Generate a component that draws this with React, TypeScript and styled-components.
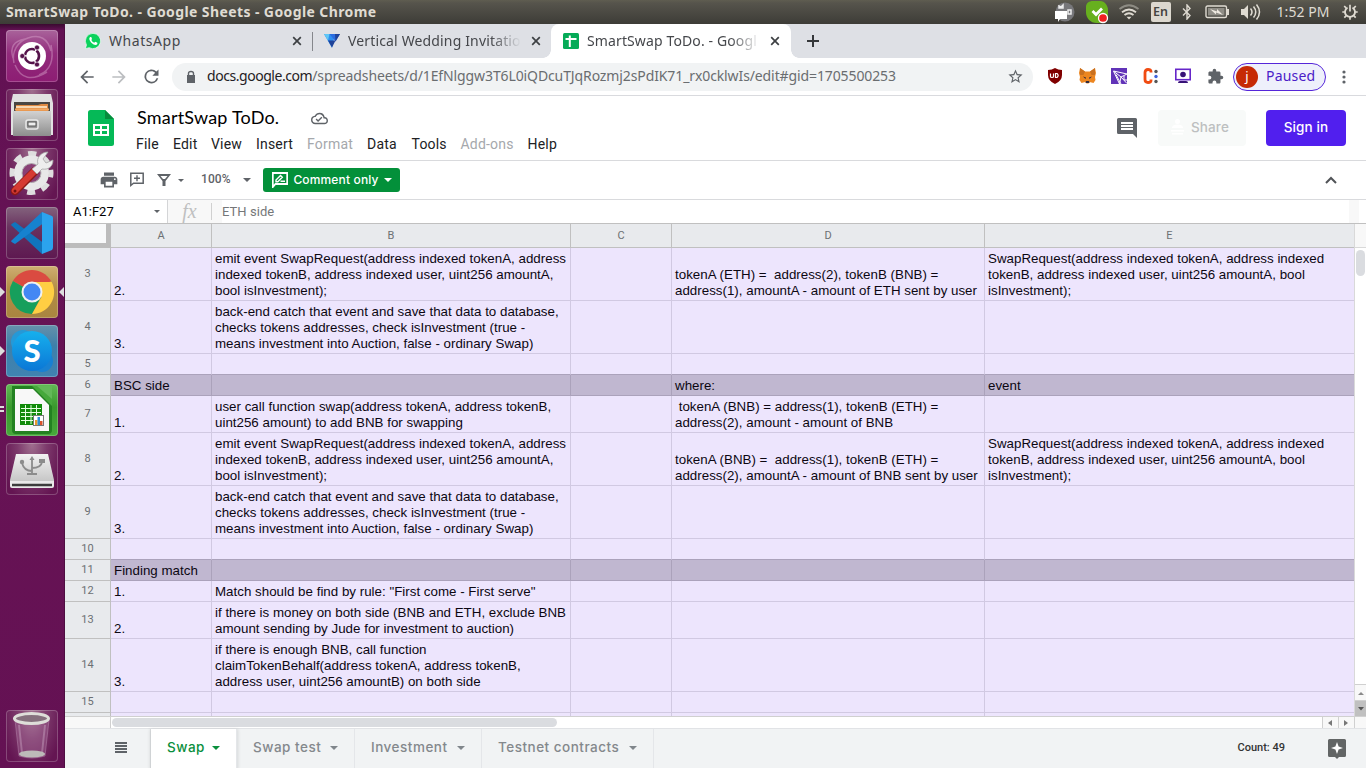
import React from "react";
import styled, { createGlobalStyle, css } from "styled-components";

const Global = createGlobalStyle`
  * { box-sizing: border-box; }
  body { margin: 0; background: #fff; overflow: hidden; }
  svg { display: block; flex: none; }
`;

const ubuntu = `"Noto Sans", "Open Sans", sans-serif`;
const product = `Lato, "Open Sans", sans-serif`;
const productMedium = `Inter, "Open Sans", sans-serif`;
const roboto = `Roboto, "Liberation Sans", sans-serif`;

const Screen = styled.div`
  width: 1366px;
  height: 768px;
  display: flex;
  flex-direction: column;
  overflow: hidden;
`;

/* ---------- desktop panel ---------- */
const Panel = styled.header`
  height: 24px;
  flex: none;
  display: flex;
  align-items: center;
  justify-content: space-between;
  padding: 0 6px;
  background: linear-gradient(#5f5d50 0, #56544c 3px, #3d3c37 100%);
  color: #dfdbd2;
  font-family: ${ubuntu};
`;
const WindowTitle = styled.div`
  font-size: 14px;
  line-height: 20px;
  font-weight: 700;
  letter-spacing: 0.4px;
  white-space: pre;
`;
const Indicators = styled.div`
  display: flex;
  align-items: center;
`;
const Indicator = styled.div<{ $w: number }>`
  width: ${(p) => p.$w}px;
  height: 24px;
  display: flex;
  align-items: center;
  justify-content: center;
`;
const Clock = styled.div`
  width: 74px;
  font-size: 14px;
  line-height: 20px;
  text-align: center;
  white-space: nowrap;
  letter-spacing: 0.05px;
`;
const LangBadge = styled.div`
  width: 20px;
  height: 20px;
  border-radius: 2px;
  background: #dcd8cf;
  color: #45443f;
  font: 600 12.5px/20px ${ubuntu};
  text-align: center;
`;

const Body = styled.div`
  flex: 1;
  display: flex;
  min-height: 0;
`;

/* ---------- launcher ---------- */
const Launcher = styled.nav`
  width: 65px;
  flex: none;
  display: flex;
  flex-direction: column;
  gap: 7px;
  padding: 6px 6px 6px 6px;
  background: linear-gradient(#3a0a30 0, #621153 6px, #671355 50%, #641153 100%);
  border-right: 1px solid #4e0d41;
`;
const Tile = styled.div<{ $bg: string; $last?: boolean }>`
  position: relative;
  width: 52px;
  height: 52px;
  flex: none;
  border-radius: 4px;
  background: ${(p) => p.$bg};
  box-shadow: inset 0 0 0 1px rgba(255, 255, 255, 0.22);
  ${(p) => p.$last && css`margin-top: auto;`}
`;
const RunMark = styled.svg<{ $right?: boolean }>`
  position: absolute;
  top: 20px;
  ${(p) => (p.$right ? "right: -6px;" : "left: -6px;")}
`;

/* ---------- browser ---------- */
const Browser = styled.main`
  flex: 1;
  min-width: 0;
  display: flex;
  flex-direction: column;
  background: #fff;
`;
const TabStrip = styled.div`
  height: 34px;
  flex: none;
  display: flex;
  padding-left: 8px;
  background: #dee0e5;
  font-family: ${ubuntu};
`;
const BrowserTab = styled.div<{ $active?: boolean; $w: number }>`
  position: relative;
  width: ${(p) => p.$w}px;
  display: flex;
  align-items: center;
  padding: 0 ${(p) => (p.$active ? 9 : 8)}px 0 12px;
  gap: 8px;
  ${(p) =>
    p.$active &&
    css`
      background: #fff;
      border-radius: 8px 8px 0 0;
      &::before,
      &::after {
        content: "";
        position: absolute;
        bottom: 0;
        width: 8px;
        height: 8px;
      }
      &::before {
        left: -8px;
        background: radial-gradient(circle at 0 0, transparent 7.5px, #fff 8px);
      }
      &::after {
        right: -8px;
        background: radial-gradient(circle at 100% 0, transparent 7.5px, #fff 8px);
      }
    `}
`;
const TabTitle = styled.div<{ $ls: number; $fade?: boolean }>`
  flex: 1;
  min-width: 0;
  white-space: nowrap;
  font-size: 14px;
  line-height: 20px;
  color: #45474b;
  letter-spacing: ${(p) => p.$ls}px;
  ${(p) =>
    p.$fade &&
    css`
      mask-image: linear-gradient(90deg, #000 calc(100% - 30px), transparent 100%);
    `}
`;
const TabDivider = styled.div`
  width: 1px;
  height: 19px;
  margin: 8px -1px 0 0;
  background: #85878c;
`;
const NewTab = styled.div`
  width: 44px;
  display: flex;
  align-items: center;
  justify-content: center;
`;
const AddressRow = styled.div`
  height: 38px;
  flex: none;
  display: flex;
  align-items: center;
  border-bottom: 1px solid #d9dade;
  padding: 0 6px;
`;
const NavButton = styled.div`
  width: 32px;
  display: flex;
  justify-content: center;
`;
const Omnibox = styled.div`
  width: 861px;
  height: 28px;
  margin-left: 5px;
  border-radius: 14px;
  background: #f1f3f4;
  display: flex;
  align-items: center;
  padding: 0 9px 0 11px;
`;
const Url = styled.div`
  flex: 1;
  margin: -2px 0 0 8px;
  font: 14px/20px ${ubuntu};
  letter-spacing: -0.11px;
  color: #6a6d70;
  white-space: nowrap;
`;
const Host = styled.span`
  color: #1f2023;
  letter-spacing: -0.45px;
`;
const Extensions = styled.div`
  display: flex;
  margin-left: 6px;
`;
const Profile = styled.div`
  width: 93px;
  height: 28px;
  margin: 0 2px;
  border: 1.5px solid #5526d9;
  border-radius: 14px;
  background: #eef0fb;
  display: flex;
  align-items: center;
  padding-left: 2px;
  color: #4a20c8;
  font: 14px/20px ${ubuntu};
  letter-spacing: 0.2px;
`;
const ProfileState = styled.span`
  margin-top: -2px;
`;
const Avatar = styled.div`
  width: 22px;
  height: 22px;
  margin-right: 8px;
  border-radius: 50%;
  background: #c62a05;
  color: #fff;
  font: 13px/20px ${ubuntu};
  text-align: center;
`;

/* ---------- document header ---------- */
const DocHeader = styled.div`
  height: 65px;
  flex: none;
  display: flex;
  align-items: flex-start;
  border-bottom: 1px solid #d9dadd;
  padding: 14px 20px 0 23px;
`;
const DocMeta = styled.div`
  flex: 1;
  margin: -6px 0 0 22px;
`;
const TitleRow = styled.div`
  height: 28px;
  display: flex;
  align-items: center;
`;
const DocTitle = styled.div`
  width: 175px;
  padding-left: 1px;
  margin-top: -2px;
  font: 18px/24px ${product};
  letter-spacing: 0.2px;
  color: #000;
`;
const MenuBar = styled.div`
  display: flex;
  font: 14px/20px ${roboto};
  letter-spacing: 0.2px;
  margin-top: 2px;
`;
const MenuItem = styled.div<{ $w: number; $off?: boolean }>`
  width: ${(p) => p.$w}px;
  white-space: nowrap;
  color: ${(p) => (p.$off ? "#a5a8ac" : "#202124")};
`;
const HeaderIcon = styled.div`
  margin: 8px 21px 0 0;
`;
const HeaderButton = styled.div<{ $primary?: boolean }>`
  width: ${(p) => (p.$primary ? 80 : 88)}px;
  height: 36px;
  margin-left: ${(p) => (p.$primary ? 20 : 0)}px;
  border-radius: 4px;
  display: flex;
  align-items: center;
  justify-content: center;
  gap: 7px;
  padding: 0 ${(p) => (p.$primary ? 0 : 4)}px 2px 0;
  font: 500 13.5px/20px ${productMedium};
  letter-spacing: 0.1px;
  background: ${(p) => (p.$primary ? "#511fee" : "#f8faf9")};
  color: ${(p) => (p.$primary ? "#fff" : "#bdbfc0")};
`;

/* ---------- toolbar ---------- */
const ToolRow = styled.div`
  height: 39px;
  flex: none;
  display: flex;
  align-items: center;
  padding: 0 29px 0 34px;
  border-bottom: 1px solid #d9dadd;
`;
const Slot = styled.div<{ $w: number }>`
  width: ${(p) => p.$w}px;
  flex: none;
  display: flex;
  justify-content: center;
`;
const Zoom = styled.div`
  width: 40px;
  margin: -2px 0 0 13px;
  font: 500 12px/16px ${roboto};
  letter-spacing: 0.1px;
  color: #5f6368;
`;
const CommentOnly = styled.div`
  width: 137px;
  height: 24px;
  margin: 0 auto 0 11px;
  border-radius: 3px;
  background: #03903a;
  display: flex;
  align-items: center;
  justify-content: space-between;
  padding: 0 8px 0 9px;
  color: #fff;
  font: 500 12px/16px ${productMedium};
  letter-spacing: 0.15px;
  white-space: nowrap;
`;
const Caret = styled.i<{ $c?: string; $s?: number }>`
  width: 0;
  height: 0;
  flex: none;
  border: ${(p) => p.$s ?? 4}px solid transparent;
  border-top-color: ${(p) => p.$c ?? "#5f6368"};
  border-bottom: 0;
`;

/* ---------- formula bar ---------- */
const FormulaBar = styled.div`
  height: 24px;
  flex: none;
  display: flex;
  align-items: center;
  border-bottom: 1px solid #c0c0c0;
  font: 13px/16px ${roboto};
`;
const NameBox = styled.div`
  width: 103px;
  height: 23px;
  display: flex;
  align-items: center;
  justify-content: space-between;
  padding: 0 7px 0 8px;
  border-right: 1px solid #d4d5d7;
  color: #000;
`;
const FxBox = styled.div`
  width: 43px;
  height: 23px;
  background: #f8f8f8;
  display: flex;
  align-items: center;
  justify-content: center;
  font: italic 20px/20px "Liberation Serif", serif;
  padding-bottom: 2px;
  color: #bfc0c1;
`;
const Formula = styled.div`
  flex: 1;
  display: flex;
  align-items: center;
  color: #757779;
  letter-spacing: 0.05px;
`;
const FormulaRule = styled.div`
  width: 11px;
  height: 23px;
  padding: 3px 0;
  background: #f8f8f8;
  &::before {
    content: "";
    display: block;
    width: 1px;
    height: 17px;
    background: #d0d0d0;
  }
`;
const FormulaHandle = styled.div`
  width: 10px;
  height: 23px;
  margin-right: 7px;
  background: #f8f8f8;
`;

/* ---------- grid ---------- */
const SheetArea = styled.div`
  height: 492px;
  flex: none;
  display: flex;
  overflow: hidden;
`;
const COLS = "46px 101px 359px 101px 313px 370px";
const Sheet = styled.div`
  width: 1290px;
  flex: none;
  overflow: hidden;
`;
const HeadRow = styled.div`
  display: grid;
  grid-template-columns: ${COLS};
  height: 24px;
`;
const SelectAll = styled.div`
  background: #f8f9fa;
  border: solid #bcbcbc;
  border-width: 0 5px 5px 0;
`;
const HeadCell = styled.div`
  background: #e8eaed;
  border: solid #c0c0c0;
  border-width: 0 1px 1px 0;
  color: #6c7073;
  font: 11px/23px ${roboto};
  text-align: center;
`;
const SheetRow = styled.div<{ $h: number }>`
  display: grid;
  grid-template-columns: ${COLS};
  height: ${(p) => p.$h}px;
`;
const RowNumber = styled.div`
  display: flex;
  align-items: center;
  justify-content: center;
  background: #e8eaed;
  border: solid #c0c0c0;
  border-width: 0 1px 1px 0;
  color: #6c7073;
  font: 11px/14px ${roboto};
`;
const Cell = styled.div<{ $band?: boolean; $beforeBand?: boolean }>`
  display: flex;
  align-items: flex-end;
  padding: 0 3px 1px;
  background: ${(p) => (p.$band ? "#c0b7d0" : "#ede5fd")};
  border: solid;
  border-width: 0 1px 1px 0;
  border-color: ${(p) =>
    p.$band ? "#aba2bb" : p.$beforeBand ? "#d1c9e2 #d1c9e2 #aba2bb" : "#d1c9e2"};
  color: #0c0712;
  font: 13.333px/16px "Liberation Sans", Arial, sans-serif;
  letter-spacing: 0.01px;
  white-space: pre;
`;

const VScroll = styled.div`
  flex: 1;
  display: flex;
  flex-direction: column;
  background: #fff;
  border-left: 1px solid #d9d9d9;
  margin-left: -1px;
  position: relative;
`;
const VHead = styled.div`
  height: 24px;
  background: #f8f8f8;
  border-bottom: 1px solid #d9d9d9;
`;
const VThumb = styled.div`
  width: 9px;
  height: 26px;
  margin: 2px 0 auto 1px;
  border-radius: 5px;
  background: #dadce0;
`;
const VArrow = styled.div<{ $dark?: boolean }>`
  height: 16px;
  display: flex;
  align-items: center;
  justify-content: center;
  background: ${(p) => (p.$dark ? "#c0c0c0" : "#f8f8f8")};
  border-top: 1px solid #d0d0d0;
`;
const HScroll = styled.div`
  height: 12px;
  flex: none;
  display: flex;
  border-top: 1px solid #d0d0d0;
  background: #fff;
`;
const HCorner = styled.div<{ $w: number; $last?: boolean }>`
  width: ${(p) => p.$w}px;
  background: #f8f8f8;
  border: solid #d0d0d0;
  border-width: ${(p) => (p.$last ? "0 0 0 1px" : "0 1px 0 0")};
`;
const HThumb = styled.div`
  width: 445px;
  height: 9px;
  margin: 1px auto 0 1px;
  border-radius: 5px;
  background: #dadce0;
`;
const HArrow = styled.div`
  width: 16px;
  display: flex;
  align-items: center;
  justify-content: center;
  padding-right: 2px;
  background: #f8f8f8;
  border-left: 1px solid #d0d0d0;
`;

/* ---------- sheet tabs ---------- */
const Footer = styled.footer`
  flex: 1;
  display: flex;
  background: #f1f3f4;
  border-top: 1px solid #e1e3e6;
`;
const AllSheets = styled.div`
  width: 86px;
  display: flex;
  align-items: center;
  justify-content: flex-end;
  padding: 0 23px 2px 0;
  border-right: 1px solid #e0e2e4;
`;
const SheetTab = styled.div<{ $w: number; $active?: boolean }>`
  width: ${(p) => p.$w}px;
  display: flex;
  align-items: center;
  justify-content: space-between;
  padding: 0 16px 2px;
  font: 500 13.5px/20px ${productMedium};
  letter-spacing: 0.5px;
  white-space: nowrap;
  color: ${(p) => (p.$active ? "#0a8f3c" : "#84888c")};
  background: ${(p) => (p.$active ? "#fff" : "transparent")};
  border-right: 1px solid #e4e6e9;
  ${(p) => p.$active && css`box-shadow: 0 1px 3px 1px rgba(60, 64, 67, 0.15);`}
`;
const SheetName = styled.span`
  padding-bottom: 2px;
`;
const Count = styled.div`
  margin-left: auto;
  padding-right: 43px;
  font: 500 11px/37px ${roboto};
  color: #333;
`;
const Explore = styled.div`
  padding: 10px 20px 0 0;
`;

/* ---------- small glyphs ---------- */
const Close = () => (
  <svg width="14" height="14" viewBox="0 0 14 14" stroke="#3d4043" strokeWidth="1.7">
    <path d="M3.2 3.2l7.6 7.6M10.800 3.200l-7.600 7.600" />
  </svg>
);
const Material = ({ d, s, c = "#5f6368" }: { d: string; s: number; c?: string }) => (
  <svg width={s} height={s} viewBox="0 0 24 24" fill={c}>
    <path d={d} />
  </svg>
);

const rows: { n: number; h: number; band?: boolean; c: string[] }[] = [
  { n: 3, h: 53, c: ["2.", "emit event SwapRequest(address indexed tokenA, address\nindexed tokenB, address indexed user, uint256 amountA,\nbool isInvestment);", "", "tokenA (ETH) =  address(2), tokenB (BNB) =\naddress(1), amountA - amount of ETH sent by user", "SwapRequest(address indexed tokenA, address indexed\ntokenB, address indexed user, uint256 amountA, bool\nisInvestment);"] },
  { n: 4, h: 53, c: ["3.", "back-end catch that event and save that data to database,\nchecks tokens addresses, check isInvestment (true -\nmeans investment into Auction, false - ordinary Swap)", "", "", ""] },
  { n: 5, h: 21, c: ["", "", "", "", ""] },
  { n: 6, h: 21, band: true, c: ["BSC side", "", "", "where:", "event"] },
  { n: 7, h: 37, c: ["1.", "user call function swap(address tokenA, address tokenB,\nuint256 amount) to add BNB for swapping", "", " tokenA (BNB) = address(1), tokenB (ETH) =\naddress(2), amount - amount of BNB", ""] },
  { n: 8, h: 53, c: ["2.", "emit event SwapRequest(address indexed tokenA, address\nindexed tokenB, address indexed user, uint256 amountA,\nbool isInvestment);", "", "tokenA (BNB) =  address(1), tokenB (ETH) =\naddress(2), amountA - amount of BNB sent by user", "SwapRequest(address indexed tokenA, address indexed\ntokenB, address indexed user, uint256 amountA, bool\nisInvestment);"] },
  { n: 9, h: 53, c: ["3.", "back-end catch that event and save that data to database,\nchecks tokens addresses, check isInvestment (true -\nmeans investment into Auction, false - ordinary Swap)", "", "", ""] },
  { n: 10, h: 21, c: ["", "", "", "", ""] },
  { n: 11, h: 21, band: true, c: ["Finding match", "", "", "", ""] },
  { n: 12, h: 21, c: ["1.", 'Match should be find by rule: "First come - First serve"', "", "", ""] },
  { n: 13, h: 37, c: ["2.", "if there is money on both side (BNB and ETH, exclude BNB\namount sending by Jude for investment to auction)", "", "", ""] },
  { n: 14, h: 53, c: ["3.", "if there is enough BNB, call function\nclaimTokenBehalf(address tokenA, address tokenB,\naddress user, uint256 amountB) on both side", "", "", ""] },
  { n: 15, h: 21, c: ["", "", "", "", ""] },
];

const menus: [string, number, boolean?][] = [
  ["File", 37], ["Edit", 38], ["View", 45], ["Insert", 51], ["Format", 60, true],
  ["Data", 44.5], ["Tools", 49], ["Add-ons", 67, true], ["Help", 40],
];

const sheetTabs: [string, number][] = [["Swap", 86], ["Swap test", 118], ["Investment", 127], ["Testnet contracts", 172]];

const plum = "radial-gradient(ellipse at 50% 0, #a0708f 0, #7d3a6c 40%, #641552 85%)";

const UsbDrive = () => (
  <svg width="52" height="52">
    <defs><linearGradient id="drv" x2="0" y2="1"><stop stopColor="#f2f2f2" /><stop offset="1" stopColor="#bdbdbd" /></linearGradient></defs>
    <path d="M10 11h32l6 26v5a2 2 0 01-2 2H6a2 2 0 01-2-2v-5z" fill="url(#drv)" />
    <path d="M4 38h44v5q0 2-2 2H6q-2 0-2-2z" fill="#e9e9e9" />
    <path d="M6 42h40" stroke="#3c3c3c" strokeWidth="2.6" />
    <g fill="none" stroke="#8c8c8c" strokeWidth="1.8">
      <path d="M26 15v16M26 28q-8 0-10-8M26 25q9 0 10-6M21 31h10" />
    </g>
    <circle cx="16" cy="19" r="2.2" fill="#8c8c8c" />
    <path d="M33 16h6v4h-6zM23.500 17l2.500-4 2.500 4z" fill="#8c8c8c" />
  </svg>
);

export default function App() {
  return (
    <Screen>
      <Global />
      <Panel>
        <WindowTitle>SmartSwap ToDo. - Google Sheets - Google Chrome</WindowTitle>
        <Indicators>
          <Indicator $w={38}>
            <svg width="22" height="22"><circle cx="12" cy="11" r="9.500" fill="#77777a" /><path d="M2 10h12v8H7l-2 3v-3H2z" fill="#fff" /><path d="M6 7V5l2 1 2-2v3zM15 9h3v4h-3z" fill="none" stroke="#eee" strokeWidth="1.500" /></svg>
          </Indicator>
          <Indicator $w={28}>
            <svg width="24" height="24"><path d="M8 1h7c5 0 8 5 8 9v6c0 5-4 7-8 7h-3C5 23 1 18 1 12V7c0-4 3-6 7-6z" fill="#67b01e" /><path d="M7.500 11l3.500 3.500 6-6" stroke="#fff" strokeWidth="2.800" fill="none" /><circle cx="18" cy="18" r="4.500" fill="#ef2020" stroke="#fff" strokeWidth="1.300" /></svg>
          </Indicator>
          <Indicator $w={36}>
            <svg width="22" height="16" fill="none" stroke="#dfdbd2" strokeWidth="1.800"><path d="M1.500 5Q11-2.500 20.500 5" stroke="#8d8b83" /><path d="M4 8.200q7-5.500 14 0M6.500 11q4.500-3.600 9 0" /><path d="M8.500 12.800h5L11 15.500z" fill="#dfdbd2" stroke="none" /></svg>
          </Indicator>
          <Indicator $w={27}><LangBadge>En</LangBadge></Indicator>
          <Indicator $w={26}>
            <svg width="10" height="16" fill="none" stroke="#dfdbd2" strokeWidth="1.400"><path d="M1 4.500l7 7L5 15V1l3 3.500-7 7" /></svg>
          </Indicator>
          <Indicator $w={34}>
            <svg width="25" height="14"><rect x="1" y="1" width="20.500" height="11.500" rx="1.500" fill="none" stroke="#dfdbd2" strokeWidth="1.400" /><rect x="3" y="3" width="16.500" height="7.500" fill="#8f8d86" /><path d="M22 4h2v6h-2" fill="#dfdbd2" /><path d="M5 4l7 2.500V4l6 6-7-2.500v2z" fill="#eee9e0" /></svg>
          </Indicator>
          <Indicator $w={32}>
            <svg width="21" height="18"><path d="M1 6h3l4-4v14l-4-4H1z" fill="#dfdbd2" /><path d="M10.500 5.500q3 3.500 0 7M13.500 3.500q4.500 5.500 0 11M16.500 1.500q6 7.500 0 15" fill="none" stroke="#dfdbd2" strokeWidth="1.500" /></svg>
          </Indicator>
          <Clock>1:52 PM</Clock>
          <Indicator $w={20}>
            <svg width="16" height="16" fill="none" stroke="#dfdbd2"><path d="M5.500 3.600a5 5 0 105 0" strokeWidth="1.800" /><path d="M8 .8v6.700" strokeWidth="1.700" /><path d="M4 3.800L2.200 2M12 3.800L13.800 2M3 8H.3M13 8h2.700M4.300 11.700l-2 2M11.700 11.700l2 2M8 13v2.800" strokeWidth="1.700" /></svg>
          </Indicator>
        </Indicators>
      </Panel>
      <Body>
        <Launcher>
          <Tile $bg="linear-gradient(#a9649b, #922b7c 45%, #8d1d73)">
            <svg width="52" height="52"><g fill="none" stroke="#d9a5cd" strokeOpacity=".45"><path d="M8 33A21 21 0 0122 8Q40 2 45 21M45 15Q50 38 33 45M41 42Q18 56 9 35M7 28Q2 12 19 9" strokeWidth="1.500" /></g><circle cx="26" cy="26" r="14" fill="#fff" /><circle cx="26" cy="26" r="7" fill="none" stroke="#54124a" strokeWidth="2.600" strokeDasharray="13.200 1.460" strokeDashoffset="6.500" /><g fill="#54124a" stroke="#fff" strokeWidth=".6"><circle cx="16.300" cy="26" r="2.500" /><circle cx="31" cy="17.500" r="2.500" /><circle cx="31" cy="34.500" r="2.500" /></g></svg>
          </Tile>
          <Tile $bg={plum}>
            <svg width="52" height="52"><defs><linearGradient id="cab" x2="0" y2="1"><stop stopColor="#d2d2d2" /><stop offset="1" stopColor="#8d8d8d" /></linearGradient></defs><path d="M7 5h38l2 9v32H5V14z" fill="#e1e1e1" /><path d="M8 13h36v10H8z" fill="#4a4642" /><path d="M10 16h22l3-1h7v8H10z" fill="#e08a42" /><path d="M10 18h31" stroke="#fff0d8" strokeWidth="1.500" /><path d="M9 20.500h34" stroke="#f1a763" strokeWidth="2" /><path d="M7 22h38v25H7z" fill="url(#cab)" /><rect x="20" y="31" width="12" height="9" rx="2" fill="#999" stroke="#e9e9e9" strokeWidth="1.500" /><rect x="22" y="33" width="8" height="4" fill="#eee" stroke="#555" /></svg>
          </Tile>
          <Tile $bg={plum}>
            <svg width="52" height="52"><circle cx="25.500" cy="25" r="19.500" fill="none" stroke="#dedede" strokeWidth="5" strokeDasharray="8.300 7.015" strokeDashoffset="4" /><circle cx="25.500" cy="25" r="13.500" fill="none" stroke="#e8e8e8" strokeWidth="8" /><circle cx="25.500" cy="25" r="9.500" fill="#893f75" stroke="#b5b5b5" /><path d="M9 43L29 23" stroke="#8b1a16" strokeWidth="8.500" strokeLinecap="round" /><path d="M9 42.500L29 22.500" stroke="#d53a32" strokeWidth="6.500" strokeLinecap="round" /><path d="M26 21l6-5c-2-6 3-12 10-12l-5 7 3 4 7-3c0 7-5 10-11 9l-5 5z" fill="#eee" stroke="#a6a6a6" strokeWidth=".8" /><circle cx="9" cy="43" r="1.500" fill="#75110f" /></svg>
          </Tile>
          <Tile $bg="linear-gradient(#83637d, #69325f 40%, #5e1850)">
            <svg width="52" height="52"><path d="M5 18q0-1 4-3l30 22-3 10z" fill="#1074bd" /><path d="M5 34q0 1 4 3l30-22-3-10z" fill="#1682cf" /><path d="M36 5l10 4q1 .5 1 2v29q0 2-1 3l-10 4z" fill="#2ba3ee" /></svg>
          </Tile>
          <Tile $bg="linear-gradient(#cfae72, #b28d45 45%, #a98540)">
            <RunMark width="5" height="12"><path d="M0 1l5 5-5 5z" fill="#ddd" /></RunMark>
            <svg width="52" height="52"><path d="M26 26L6.900 15A22 22 0 0145 15z" fill="#da4b41" /><path d="M26 26L6.900 15A22 22 0 0026 48l9-17z" fill="#169f5c" /><path d="M26 16h19.700A22 22 0 0126 48l9.500-17z" fill="#ffce43" /><circle cx="26" cy="26" r="10.500" fill="#f1f1f1" /><circle cx="26" cy="26" r="8.500" fill="#4387f4" /></svg>
            <RunMark $right width="5" height="12"><path d="M5 1L0 6l5 5z" fill="#ddd" /></RunMark>
          </Tile>
          <Tile $bg="linear-gradient(#6690ab, #3e80aa 40%, #4083b1)">
            <RunMark width="5" height="12"><path d="M0 1l5 5-5 5z" fill="#ddd" /></RunMark>
            <svg width="52" height="52"><defs><linearGradient id="sky" x2="0" y2="1"><stop stopColor="#16b0ed" /><stop offset="1" stopColor="#0b77d6" /></linearGradient></defs><circle cx="17" cy="17" r="12" fill="#2599d7" /><circle cx="36" cy="36" r="11" fill="#1881d3" /><circle cx="26" cy="26" r="20" fill="url(#sky)" /><text x="26" y="37" textAnchor="middle" fontFamily="Lato, sans-serif" fontWeight="900" fontSize="31" fill="#fff">S</text></svg>
          </Tile>
          <Tile $bg="linear-gradient(#62b955, #39992d 45%, #47a83b)">
            <RunMark width="5" height="12"><path d="M0 3h4M0 7h4" stroke="#ddd" strokeWidth="2" /></RunMark>
            <svg width="52" height="52"><path d="M6 2h40v44q0 4-4 4H10q-4 0-4-4z" fill="#238121" /><path d="M9 5h18l16 16v26H9z" fill="#f8f8f8" /><path d="M26 2h20v20z" fill="#46a83b" /><path d="M31 2h15v13z" fill="#63b858" /><rect x="14" y="20" width="22" height="21" fill="#118b0a" /><g stroke="#e5ffe0" strokeWidth="1"><path d="M15 24.500h20M15 28.500h20M15 32.500h20M15 36.500h20M19.500 21v19M25 21v19M30.500 21v19" /></g><rect x="27.500" y="31.500" width="10" height="10" fill="#fff" stroke="#777" /><path d="M29 36h2.500v5H29z" fill="#e99a2c" /><path d="M31.500 33H34v8h-2.500z" fill="#2f8fd0" /><path d="M34 37h2.500v4H34z" fill="#d9532b" /></svg>
          </Tile>
          <Tile $bg={plum}><UsbDrive /></Tile>
          <Tile $last $bg={plum}>
            <svg width="52" height="52"><path d="M9 10h34l-4 36q-13 4-26 0z" fill="#d9a9cf" fillOpacity=".2" stroke="#c69bbd" strokeOpacity=".4" /><path d="M13 15l3 28M39 15l-3 28" stroke="#e8cfe3" strokeOpacity=".3" strokeWidth="2" /><ellipse cx="26" cy="44" rx="13" ry="3.500" fill="#bdbab9" /><ellipse cx="25.500" cy="8.500" rx="17" ry="5" fill="#85707d" stroke="#deded9" strokeWidth="3" /></svg>
          </Tile>
        </Launcher>
        <Browser>
          <TabStrip>
            <BrowserTab $w={239}>
              <svg width="16" height="16" viewBox="0 0 24 24"><path d="M12 .5A11.500 11.500 0 002.200 18L.6 23.500 6.200 22A11.500 11.500 0 1012 .5z" fill="#0bd25d" stroke="#fff" /><path d="M8 6c-3 1.500-1 6 2 9s7 4 8.500 1.500v-2L15.500 13l-1.700 1.700q-3-1.200-4.300-4.300L10.500 9 9.400 6z" fill="#fff" /></svg>
              <TabTitle $ls={0.55}>WhatsApp</TabTitle>
              <Close />
            </BrowserTab>
            <TabDivider />
            <BrowserTab $w={239}>
              <svg width="16" height="16"><path d="M0 1h11L8 15z" fill="#2d8ef0" /><path d="M0 1h5.500L4 7.500z" fill="#60c7f5" /><path d="M5.500 1H16l-4.500 7.500z" fill="#2a6ce0" /><path d="M11 1h5l-4.500 7.500zM4 7.500h7.500L8 14.500z" fill="#1f4399" /></svg>
              <TabTitle $ls={0.15} $fade>Vertical Wedding Invitatio</TabTitle>
              <Close />
            </BrowserTab>
            <BrowserTab $w={240} $active>
              <svg width="16" height="16"><rect width="16" height="16" rx="1.500" fill="#05ab57" /><path d="M2.500 6h11M6.800 2.500v11.500" stroke="#fff" strokeWidth="2" /></svg>
              <TabTitle $ls={0.12} $fade>SmartSwap ToDo. - Googl</TabTitle>
              <Close />
            </BrowserTab>
            <NewTab><svg width="14" height="14" stroke="#35373a" strokeWidth="2"><path d="M7 1v12M1 7h12" /></svg></NewTab>
          </TabStrip>
          <AddressRow>
            <NavButton><Material s={20} d="M20 11H7.830l5.590-5.590L12 4l-8 8 8 8 1.410-1.410L7.830 13H20z" /></NavButton>
            <NavButton><Material s={20} c="#bcbec1" d="M12 4l-1.410 1.410L16.170 11H4v2h12.170l-5.580 5.590L12 20l8-8z" /></NavButton>
            <NavButton><Material s={21} d="M17.650 6.350A8 8 0 1019.730 14h-2.080A6 6 0 1112 6c1.660 0 3.140.69 4.220 1.780L13 11h7V4z" /></NavButton>
            <Omnibox>
              <svg width="16" height="16"><path d="M4 6h8v8H4z" fill="#5f6368" /><path d="M5.500 7V4.500q0-2 2.500-2t2.500 2V7" fill="none" stroke="#5f6368" strokeWidth="1.400" /></svg>
              <Url><Host>docs.google.com</Host>/spreadsheets/d/1EfNlggw3T6L0iQDcuTJqRozmj2sPdIK71_rx0cklwIs/edit#gid=1705500253</Url>
              <Material s={17} d="M22 9.240l-7.190-.62L12 2 9.190 8.630 2 9.240l5.460 4.730L5.820 21 12 17.270 18.180 21l-1.630-7.030zM12 15.400l-3.760 2.270 1-4.280-3.320-2.880 4.380-.38L12 6.100l1.710 4.040 4.380.38-3.320 2.880 1 4.280z" />
            </Omnibox>
            <Extensions>
              <NavButton><svg width="16" height="16"><path d="M8 0q3 2 7 2v5q0 6-7 9-7-3-7-9V2q4 0 7-2z" fill="#800000" /><path d="M3.500 5.500v3q0 1 1.500 1t1.500-1v-3M8.500 5.500v4h1.500q2.300-2 0-4z" stroke="#fff" strokeWidth="1.200" fill="none" /></svg></NavButton>
              <NavButton><svg width="17" height="16"><path d="M1 0l5 3.500h5L16 0l1 5-1 4 .5 3-2 3-4-1-1 1.500h-2L6.500 14l-4 1-2-3L1 9 0 5z" fill="#ec8620" /><path d="M1 0l5 3.500L4.500 7 1 7zM16 0l-5 3.500L12.500 7l3.500 0z" fill="#c9701f" /><path d="M4 8.500l3 1-.5 1.500zM13 8.500l-3 1 .5 1.500zM7 13h3l.5 2h-4z" fill="#352c3d" /></svg></NavButton>
              <NavButton><svg width="16" height="16"><rect width="16" height="16" fill="#6133b8" /><path d="M2.500 3L16 6 10 9l-1.500 7zM3 3.500l7 5.500M5 6.500l5 9.500M10 9l6 6.500M13 8v4h3" fill="none" stroke="#fff" strokeWidth="1" /></svg></NavButton>
              <NavButton><svg width="16" height="16"><path d="M8 4.500V3.500Q8 1.500 5 1.500T2 4.500v7q0 3 3 3t3-2v-1" fill="none" stroke="#f04b12" strokeWidth="2.800" /><circle cx="13" cy="3.500" r="1.700" fill="#555" /><circle cx="13" cy="8.500" r="1.700" fill="#3e63dd" /><circle cx="13" cy="13.500" r="1.700" fill="#555" /></svg></NavButton>
              <NavButton><svg width="16" height="16"><rect x=".8" y="1.300" width="14.400" height="10.400" fill="#fff" stroke="#6626c9" strokeWidth="1.600" /><circle cx="8" cy="6.500" r="2.800" fill="#371277" /><path d="M3 15q0-2 2-2h6q2 0 2 2z" fill="#371277" /></svg></NavButton>
              <NavButton><Material s={17} d="M20.500 11H19V7c0-1.100-.9-2-2-2h-4V3.500a2.500 2.500 0 00-5 0V5H4c-1.100 0-1.990.9-1.990 2v3.800H3.500a2.700 2.700 0 010 5.400H2V20c0 1.100.9 2 2 2h3.800v-1.500a2.700 2.700 0 015.400 0V22H17c1.100 0 2-.9 2-2v-4h1.500a2.500 2.500 0 000-5z" /></NavButton>
            </Extensions>
            <Profile><Avatar>j</Avatar><ProfileState>Paused</ProfileState></Profile>
            <NavButton><svg width="4" height="14" fill="#5f6368"><circle cx="2" cy="2" r="1.600" /><circle cx="2" cy="7" r="1.600" /><circle cx="2" cy="12" r="1.600" /></svg></NavButton>
          </AddressRow>

          <DocHeader>
            <svg width="26" height="36"><path d="M2.500 0H17l9 9v24.500q0 2.500-2.500 2.500h-21Q0 36 0 33.500v-31Q0 0 2.500 0z" fill="#05b957" /><path d="M17 0l9 9h-9z" fill="#078c3d" /><path d="M5 14h16v12H5z" fill="#fff" /><path d="M7 16h5v3H7zM14 16h5v3h-5zM7 21h5v3H7zM14 21h5v3h-5z" fill="#05b957" /></svg>
            <DocMeta>
              <TitleRow>
                <DocTitle>SmartSwap ToDo.</DocTitle>
                <Material s={17} d="M19.350 10.040A7.490 7.490 0 0012 4C9.110 4 6.600 5.640 5.350 8.040A5.994 5.994 0 000 14c0 3.310 2.690 6 6 6h13c2.760 0 5-2.240 5-5 0-2.640-2.050-4.780-4.650-4.960zM19 18H6c-2.210 0-4-1.790-4-4 0-2.050 1.530-3.760 3.560-3.970l1.070-.11.5-.95A5.469 5.469 0 0112 6c2.620 0 4.880 1.860 5.390 4.430l.3 1.500 1.530.11A2.980 2.980 0 0122 15c0 1.650-1.350 3-3 3zm-9-3.820l-2.090-2.090L6.500 13.500 10 17l6.010-6.010-1.410-1.410z" />
              </TitleRow>
              <MenuBar>{menus.map(([t, w, off]) => <MenuItem key={t} $w={w} $off={off}>{t}</MenuItem>)}</MenuBar>
            </DocMeta>
            <HeaderIcon><svg width="20" height="20"><path d="M1.500 0h17Q20 0 20 1.500V20l-4-4H1.500Q0 16 0 14.500v-13Q0 0 1.500 0z" fill="#5f6368" /><path d="M4 5h12M4 8h12M4 11h12" stroke="#fff" strokeWidth="1.800" /></svg></HeaderIcon>
            <HeaderButton>
              <svg width="13" height="18" fill="#fff"><circle cx="6.500" cy="3.500" r="2.500" /><path d="M1 10q0-3.500 5.500-3.500T12 10zM0 12h13v1.500H0zM1 15h11v1.500H1z" /></svg>
              Share
            </HeaderButton>
            <HeaderButton $primary>Sign in</HeaderButton>
          </DocHeader>

          <ToolRow>
            <Slot $w={20}><Material s={20} d="M19 8H5c-1.660 0-3 1.340-3 3v6h4v4h12v-4h4v-6c0-1.660-1.340-3-3-3zm-3 11H8v-5h8zm3-7a1 1 0 110-2 1 1 0 010 2zM18 3H6v4h12z" /></Slot>
            <Slot $w={36}><svg width="16" height="16"><path d="M1.800 1.300h12.400v9.900H4.500L1.800 13.500z" fill="none" stroke="#5f6368" strokeWidth="1.500" /><path d="M8 3.300v6M5 6.300h6" stroke="#5f6368" strokeWidth="1.400" /></svg></Slot>
            <Slot $w={18}><svg width="14" height="12"><path d="M0 0h14L8.500 7v5h-3V7z" fill="#5f6368" /><path d="M3.500 2h7L8 5H6z" fill="#fff" /></svg></Slot>
            <Slot $w={15}><Caret $s={3} /></Slot>
            <Zoom>100%</Zoom>
            <Slot $w={11}><Caret /></Slot>
            <CommentOnly>
              <svg width="16" height="16" fill="none" stroke="#fff"><path d="M.8 15V1h14.400v11H3.500z" strokeWidth="1.800" /><path d="M4 9.800V8l4.500-4.500 1.800 1.800L5.800 9.800zM8.500 9.300H13" strokeWidth="1.400" /></svg>
              Comment only
              <Caret $c="#fff" />
            </CommentOnly>
            <svg width="12" height="8"><path d="M1 7l5-5 5 5" stroke="#505357" strokeWidth="2" fill="none" /></svg>
          </ToolRow>

          <FormulaBar>
            <NameBox>A1:F27<Caret $s={3} /></NameBox>
            <FxBox>fx</FxBox>
            <Formula><FormulaRule />ETH side</Formula>
            <FormulaHandle />
          </FormulaBar>

          <SheetArea>
            <Sheet>
              <HeadRow>
                <SelectAll />
                {["A", "B", "C", "D", "E"].map((c) => <HeadCell key={c}>{c}</HeadCell>)}
              </HeadRow>
              {rows.map((r, i) => (
                <SheetRow key={r.n} $h={r.h}>
                  <RowNumber>{r.n}</RowNumber>
                  {r.c.map((t, k) => <Cell key={k} $band={r.band} $beforeBand={rows[i + 1]?.band}>{t}</Cell>)}
                </SheetRow>
              ))}
              <SheetRow $h={21}><RowNumber />{[0, 1, 2, 3, 4].map((k) => <Cell key={k} />)}</SheetRow>
            </Sheet>
            <VScroll>
              <VHead />
              <VThumb />
              <VArrow><svg width="6" height="4"><path d="M0 4l3-3 3 3z" fill="#8a8a8a" /></svg></VArrow>
              <VArrow $dark><svg width="6" height="4"><path d="M0 0h6L3 3.500z" fill="#555" /></svg></VArrow>
            </VScroll>
          </SheetArea>
          <HScroll>
            <HCorner $w={46} />
            <HThumb />
            <HArrow><svg width="4" height="6"><path d="M4 0v6L0 3z" fill="#777" /></svg></HArrow>
            <HArrow><svg width="4" height="6"><path d="M0 0v6l4-3z" fill="#777" /></svg></HArrow>
            <HCorner $w={12} $last />
          </HScroll>
          <Footer>
            <AllSheets><svg width="12" height="11" stroke="#5f6368" strokeWidth="1.800"><path d="M0 1h12M0 4h12M0 7h12M0 10h12" /></svg></AllSheets>
            {sheetTabs.map(([t, w], i) => (
              <SheetTab key={t} $w={w} $active={i === 0}><SheetName>{t}</SheetName><Caret $c={i === 0 ? "#0a8f3c" : "#80868b"} /></SheetTab>
            ))}
            <Count>Count: 49</Count>
            <Explore><svg width="18" height="20"><path d="M1.500 0h15Q18 0 18 1.500v15q0 1.500-1.500 1.500H11l-2 2-2-2H1.500Q0 18 0 16.500v-15Q0 0 1.500 0z" fill="#626565" /><path d="M9 3l1.600 4.400L15 9l-4.400 1.600L9 15l-1.600-4.400L3 9l4.400-1.600z" fill="#fff" /></svg></Explore>
          </Footer>
        </Browser>
      </Body>
    </Screen>
  );
}
